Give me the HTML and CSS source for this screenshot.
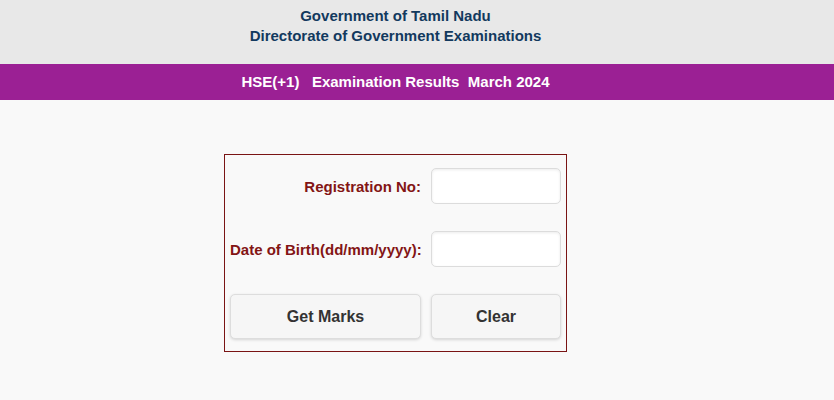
FILE: index.html
```html
<!DOCTYPE html>
<html lang="en">
<head>
<meta charset="utf-8">
<title>HSE(+1) Examination Results March 2024</title>
<link rel="stylesheet" href="styles.css">
</head>
<body>
<header class="top">
  <div class="inner">
    <div class="title-line">Government of Tamil Nadu</div>
    <div class="title-line">Directorate of Government Examinations</div>
  </div>
</header>
<div class="band">
  <div class="inner">HSE(+1)&nbsp;&nbsp; Examination Results&nbsp; March 2024</div>
</div>
<main class="page">
  <form class="result-form" onsubmit="return false;">
    <label class="field-label" for="regno">Registration No:</label>
    <input class="field-input" id="regno" type="text">
    <label class="field-label" for="dob">Date of Birth(dd/mm/yyyy):</label>
    <input class="field-input" id="dob" type="text">
    <button class="btn" type="submit">Get Marks</button>
    <button class="btn" type="reset">Clear</button>
  </form>
</main>
</body>
</html>
```
FILE: styles.css
```css
html, body {
  margin: 0;
  padding: 0;
}
body {
  background: #f9f9f9;
  font-family: "Liberation Sans", Arial, sans-serif;
  min-height: 400px;
}
.inner {
  width: 791px;
  text-align: center;
}
.top {
  background: #e8e8e8;
  height: 64px;
  box-sizing: border-box;
  padding-top: 6px;
}
.title-line {
  color: #12395e;
  font-weight: bold;
  font-size: 15px;
  line-height: 20px;
}
.band {
  background: #9b2094;
  height: 36px;
  color: #ffffff;
  font-weight: bold;
  font-size: 15px;
  line-height: 36px;
}
.page {
  width: 791px;
  display: flex;
  justify-content: center;
  padding-top: 54px;
}
.result-form {
  width: 343px;
  box-sizing: border-box;
  border: 1px solid #7a1414;
  padding: 13px 5px 12px 5px;
  display: grid;
  grid-template-columns: 191px 130px;
  grid-template-rows: 36px 36px 45px;
  column-gap: 10px;
  row-gap: 27px;
  align-items: center;
}
.field-label {
  color: #831515;
  font-weight: bold;
  font-size: 15px;
  text-align: right;
  white-space: nowrap;
}
.field-input {
  box-sizing: border-box;
  width: 130px;
  height: 36px;
  margin: 0;
  background: #ffffff;
  border: 1px solid #dcdcdc;
  border-radius: 5px;
  box-shadow: inset 0 1px 3px rgba(0, 0, 0, 0.08);
  font-family: inherit;
  font-size: 15px;
  padding: 0 8px;
}
.btn {
  box-sizing: border-box;
  height: 45px;
  width: 100%;
  margin: 0;
  background: #f6f6f6;
  border: 1px solid #dddddd;
  border-radius: 5px;
  box-shadow: 0 1px 3px rgba(0, 0, 0, 0.15);
  color: #333333;
  font-family: inherit;
  font-weight: bold;
  font-size: 16px;
  cursor: pointer;
}
```
